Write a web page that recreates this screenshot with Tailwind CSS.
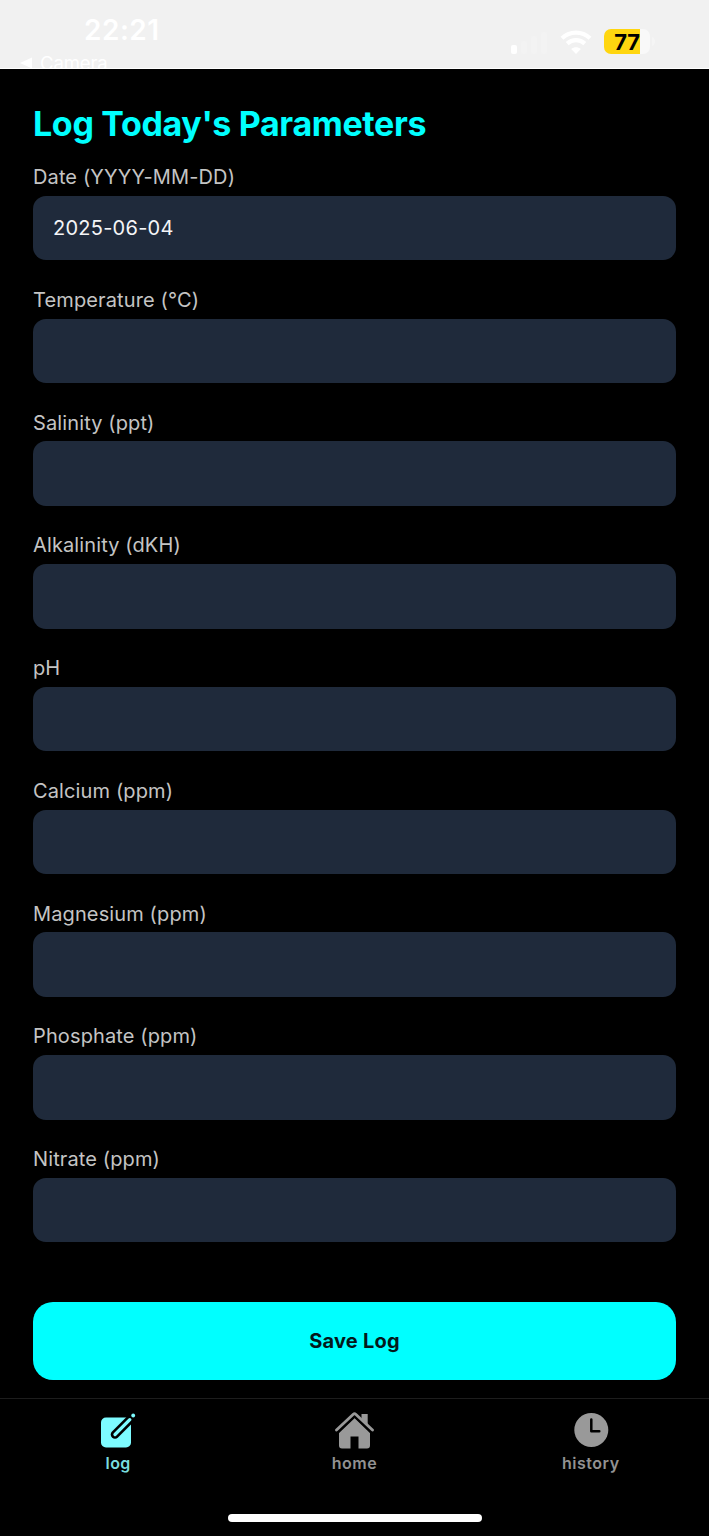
<!DOCTYPE html>
<html lang="en">
<head>
<meta charset="utf-8">
<title>Log Today's Parameters</title>
<script src="https://cdn.jsdelivr.net/npm/@tailwindcss/browser@4"></script>
</head>
<body class="bg-black">
<div class="flex h-[1536px] w-[709px] flex-col overflow-hidden bg-black font-['Inter','Liberation_Sans',sans-serif]">
  <header class="flex h-[69px] shrink-0 justify-between overflow-hidden border-b border-white bg-[#f1f1f1] text-white">
    <div class="pt-[14px] pl-[20px]">
      <div class="pl-[64px] text-[28px] leading-8 font-semibold tracking-[0.5px]">22:21</div>
      <div class="mt-[5px] flex items-center gap-[7px] text-[18.5px] leading-6 tracking-[-0.1px]">
        <svg class="h-[12px] w-[13px]" viewBox="0 0 13 12" fill="currentColor"><path d="M0 6 12 .5v11z"/></svg>
        <span>Camera</span>
      </div>
    </div>
    <div class="flex h-[27px] items-center pr-[53px] mt-[28px]">
      <svg class="h-[26px] w-[38px]" viewBox="0 0 38 26"><rect x="1" y="16" width="6" height="9" rx="2" fill="#fff"/><g fill="#f3f3f3"><rect x="11" y="12" width="6" height="13" rx="2"/><rect x="21" y="7" width="6" height="18" rx="2"/><rect x="31" y="3" width="6" height="22" rx="2"/></g></svg>
      <svg class="ml-[12px] h-[24px] w-[32px]" viewBox="0 0 32 24" fill="none" stroke="#fff" stroke-width="4.2"><path d="M2 8.3C10 .8 22 .8 30 8.3M7.2 13.6c5-4.6 12.600-4.600 17.600 0"/><path d="M16 24l-4.800-5c2.800-2.400 6.800-2.400 9.600 0z" fill="#fff" stroke="none"/></svg>
      <div class="ml-[12px] flex h-[25px] w-[46px] items-center justify-center rounded-[7px] bg-[linear-gradient(to_right,#ffd60f_36px,#f9f9f9_36px)] pt-px text-[22px] font-bold tracking-[-0.2px] text-black">77</div>
      <svg class="ml-[2px] h-[9px] w-[4px]" viewBox="0 0 4 9"><path d="M0 0c4 1 4 8 0 9z" fill="#f5f5f5"/></svg>
    </div>
  </header>

  <main class="flex h-[1329px] shrink-0 flex-col px-[33px] pt-[35px]">
    <h1 class="h-[40px] text-[34px] leading-10 font-bold tracking-[-0.35px] whitespace-nowrap text-[#00ffff]">Log Today's Parameters</h1>
    <form class="mt-[21px] flex flex-col gap-[27.5px] text-[20px] leading-6 tracking-[0.12px] text-[#c4c4c4]">
      <label class="flex flex-col gap-[6.75px]"><span>Date (YYYY-MM-DD)</span><span class="flex h-[64.5px] items-center rounded-[13px] bg-[#1f2a3b] px-5 tracking-[0.25px] text-[#f4f5f7]">2025-06-04</span></label>
      <label class="flex flex-col gap-[6.75px]"><span>Temperature (°C)</span><span class="h-[64.5px] rounded-[13px] bg-[#1f2a3b]"></span></label>
      <label class="flex flex-col gap-[6.75px]"><span>Salinity (ppt)</span><span class="h-[64.5px] rounded-[13px] bg-[#1f2a3b]"></span></label>
      <label class="flex flex-col gap-[6.75px]"><span>Alkalinity (dKH)</span><span class="h-[64.5px] rounded-[13px] bg-[#1f2a3b]"></span></label>
      <label class="flex flex-col gap-[6.75px]"><span>pH</span><span class="h-[64.5px] rounded-[13px] bg-[#1f2a3b]"></span></label>
      <label class="flex flex-col gap-[6.75px]"><span>Calcium (ppm)</span><span class="h-[64.5px] rounded-[13px] bg-[#1f2a3b]"></span></label>
      <label class="flex flex-col gap-[6.75px]"><span>Magnesium (ppm)</span><span class="h-[64.5px] rounded-[13px] bg-[#1f2a3b]"></span></label>
      <label class="flex flex-col gap-[6.75px]"><span>Phosphate (ppm)</span><span class="h-[64.5px] rounded-[13px] bg-[#1f2a3b]"></span></label>
      <label class="flex flex-col gap-[6.75px]"><span>Nitrate (ppm)</span><span class="h-[64.5px] rounded-[13px] bg-[#1f2a3b]"></span></label>
    </form>
    <button class="mt-[59.75px] h-[78px] shrink-0 rounded-[20px] bg-[#00ffff] text-[20px] font-bold tracking-[0.2px] text-[#04191b]">Save Log</button>
  </main>

  <nav class="grid h-[107px] shrink-0 grid-cols-3 border-t border-[#1d1d1d] pt-[12px] text-[16px] leading-5 font-semibold tracking-[0.5px] text-[#929292]">
    <div class="flex flex-col items-center gap-[2px] text-[#79dcdf]">
      <svg class="h-[40px] w-[40px]" viewBox="0 0 40 40"><rect x="3" y="6.500" width="30" height="30" rx="5" fill="#7dfbff"/><path d="M34 6.500 17 23.500" stroke="#000" stroke-width="8.500" stroke-linecap="round"/><path d="M31.800 8.700 17 23.500" stroke="#7dfbff" stroke-width="3.300" stroke-linecap="round"/><circle cx="35.200" cy="4.500" r="1.900" fill="#7dfbff"/></svg>
      <span>log</span>
    </div>
    <div class="flex flex-col items-center gap-[2px]">
      <svg class="h-[40px] w-[40px]" viewBox="0 0 40 40" fill="#999"><path d="M27.500 3h6.200v13L27.500 10z"/><path d="M20.500 6.500 36 21v13.500a3 3 0 0 1-3 3h-8.500V25.500h-8v12H8a3 3 0 0 1-3-3V21z"/><path d="M2.500 21.300 19 5.500q1.500-1.500 3 0l16.500 15.800" fill="none" stroke="#000" stroke-width="4.500"/><path d="M2.500 19 19.300 3.300q1.200-1.100 2.400 0L38.500 19" fill="none" stroke="#999" stroke-width="2.800" stroke-linecap="round"/></svg>
      <span>home</span>
    </div>
    <div class="flex flex-col items-center gap-[2px]">
      <svg class="h-[40px] w-[40px]" viewBox="0 0 40 40"><circle cx="20.300" cy="19" r="17" fill="#999"/><path d="M20.300 8.500V20.300h8" fill="none" stroke="#000" stroke-width="2.500" stroke-linecap="round" stroke-linejoin="round"/></svg>
      <span>history</span>
    </div>
  </nav>
  <div class="mt-[9px] h-[8px] w-[254px] shrink-0 self-center rounded-full bg-white"></div>
</div>
</body>
</html>
